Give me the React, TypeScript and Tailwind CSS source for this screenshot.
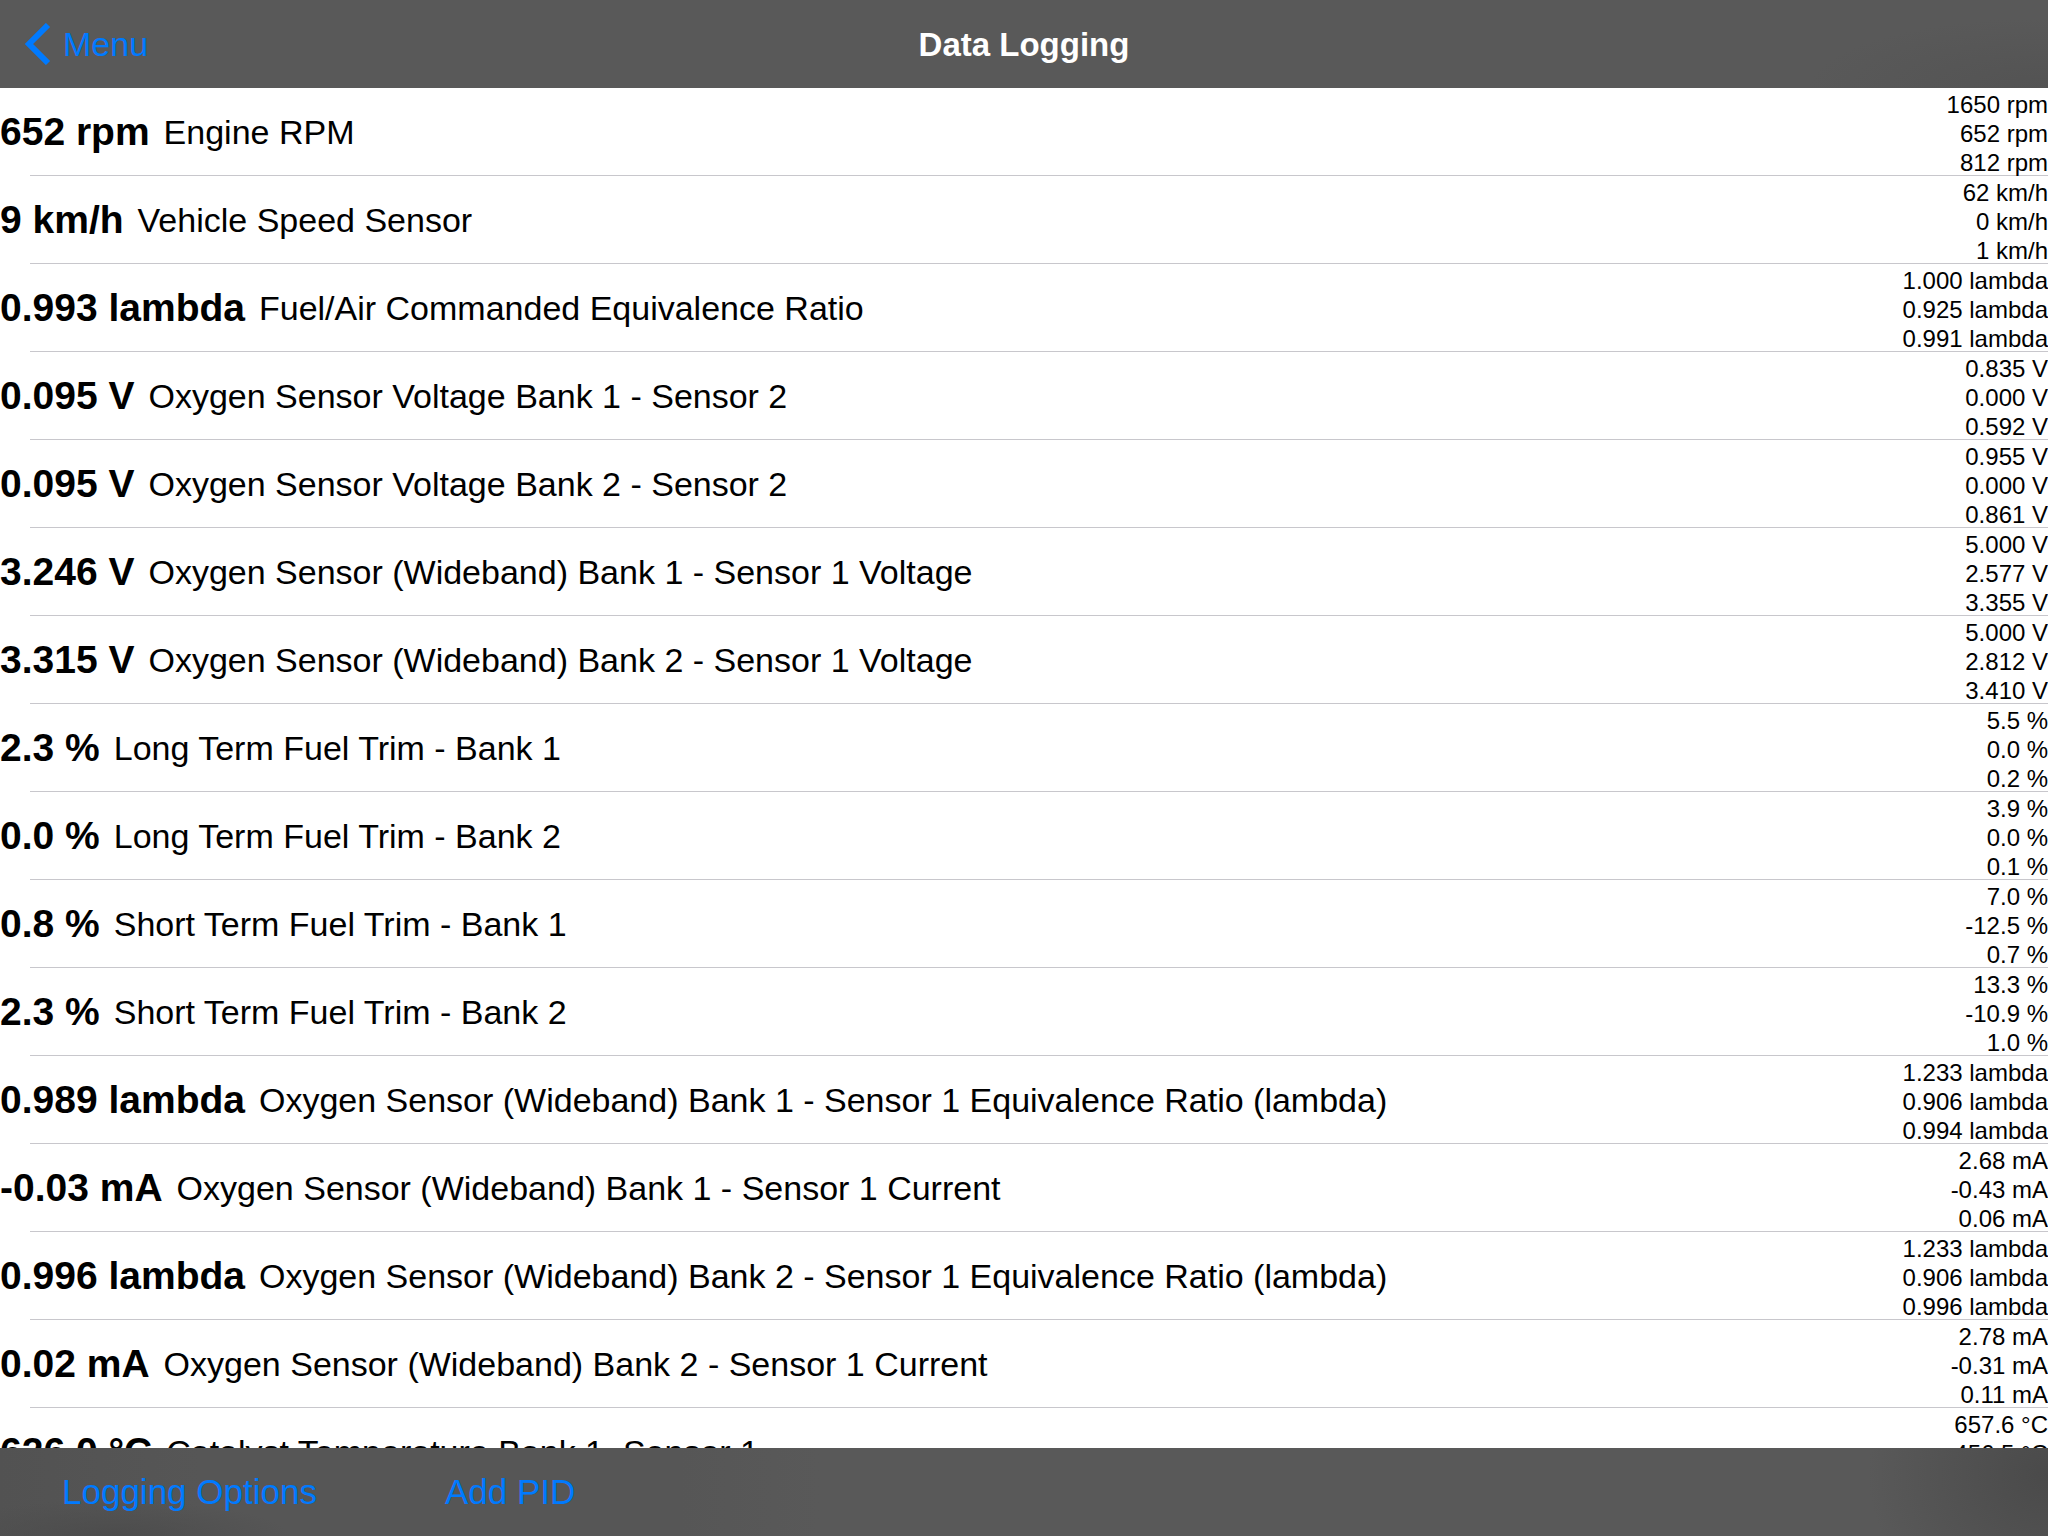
type Reading = {
  value: string;
  name: string;
  stats: [string, string, string];
};

const readings: Reading[] = [
  { value: "652 rpm", name: "Engine RPM", stats: ["1650 rpm", "652 rpm", "812 rpm"] },
  { value: "9 km/h", name: "Vehicle Speed Sensor", stats: ["62 km/h", "0 km/h", "1 km/h"] },
  { value: "0.993 lambda", name: "Fuel/Air Commanded Equivalence Ratio", stats: ["1.000 lambda", "0.925 lambda", "0.991 lambda"] },
  { value: "0.095 V", name: "Oxygen Sensor Voltage Bank 1 - Sensor 2", stats: ["0.835 V", "0.000 V", "0.592 V"] },
  { value: "0.095 V", name: "Oxygen Sensor Voltage Bank 2 - Sensor 2", stats: ["0.955 V", "0.000 V", "0.861 V"] },
  { value: "3.246 V", name: "Oxygen Sensor (Wideband) Bank 1 - Sensor 1 Voltage", stats: ["5.000 V", "2.577 V", "3.355 V"] },
  { value: "3.315 V", name: "Oxygen Sensor (Wideband) Bank 2 - Sensor 1 Voltage", stats: ["5.000 V", "2.812 V", "3.410 V"] },
  { value: "2.3 %", name: "Long Term Fuel Trim - Bank 1", stats: ["5.5 %", "0.0 %", "0.2 %"] },
  { value: "0.0 %", name: "Long Term Fuel Trim - Bank 2", stats: ["3.9 %", "0.0 %", "0.1 %"] },
  { value: "0.8 %", name: "Short Term Fuel Trim - Bank 1", stats: ["7.0 %", "-12.5 %", "0.7 %"] },
  { value: "2.3 %", name: "Short Term Fuel Trim - Bank 2", stats: ["13.3 %", "-10.9 %", "1.0 %"] },
  { value: "0.989 lambda", name: "Oxygen Sensor (Wideband) Bank 1 - Sensor 1 Equivalence Ratio (lambda)", stats: ["1.233 lambda", "0.906 lambda", "0.994 lambda"] },
  { value: "-0.03 mA", name: "Oxygen Sensor (Wideband) Bank 1 - Sensor 1 Current", stats: ["2.68 mA", "-0.43 mA", "0.06 mA"] },
  { value: "0.996 lambda", name: "Oxygen Sensor (Wideband) Bank 2 - Sensor 1 Equivalence Ratio (lambda)", stats: ["1.233 lambda", "0.906 lambda", "0.996 lambda"] },
  { value: "0.02 mA", name: "Oxygen Sensor (Wideband) Bank 2 - Sensor 1 Current", stats: ["2.78 mA", "-0.31 mA", "0.11 mA"] },
  { value: "626.0 °C", name: "Catalyst Temperature Bank 1, Sensor 1", stats: ["657.6 °C", "456.5 °C", "610.2 °C"] },
];

function ReadingRow({ reading }: { reading: Reading }) {
  return (
    <li>
      <div className="flex h-[87px] items-start justify-between">
        <div className="flex h-full items-center gap-[14px] whitespace-nowrap">
          <strong className="text-[39px] leading-[48px] font-bold">{reading.value}</strong>
          <span className="text-[34px] leading-[48px]">{reading.name}</span>
        </div>
        <div className="pt-0.5 text-right text-2xl leading-[29px] whitespace-nowrap">
          {reading.stats.map((stat, index) => <p key={index}>{stat}</p>)}
        </div>
      </div>
      <div className="ml-[30px] h-px bg-[#c8c7cc]" />
    </li>
  );
}

export default function App() {
  return (
    <div className="flex h-screen flex-col overflow-hidden bg-white font-['Liberation_Sans',Arial,sans-serif] text-black">
      <header className="grid h-[88px] shrink-0 grid-cols-3 items-center bg-[#595959] bg-[radial-gradient(ellipse_240px_70px_at_100%_100%,#535353,transparent)]">
        <button type="button" className="flex items-center gap-3 justify-self-start pl-6 text-[34px] leading-10 text-[#007aff]">
          <svg className="h-[42px] w-[27px]" viewBox="0 0 27 42" fill="none" stroke="currentColor" strokeWidth="6" aria-hidden="true">
            <path d="M24 2 5 21 24 40" />
          </svg>
          Menu
        </button>
        <h1 className="pt-0.5 text-center text-[33px] leading-10 font-bold text-white">Data Logging</h1>
      </header>
      <main className="min-h-0 flex-1 overflow-hidden">
        <ul>
          {readings.map((reading, index) => <ReadingRow key={index} reading={reading} />)}
        </ul>
      </main>
      <footer className="flex h-[88px] shrink-0 items-center gap-32 bg-[#595959] bg-[radial-gradient(ellipse_180px_36px_at_110px_100%,#4c4c4c,transparent),radial-gradient(ellipse_180px_160px_at_100%_30%,#4a4a4a,transparent),linear-gradient(to_right,#525252,#565656_200px,#565656_680px,transparent_820px)] px-[62px] text-[35px] leading-10 text-[#007aff]">
        <button type="button">Logging Options</button>
        <button type="button">Add PID</button>
      </footer>
    </div>
  );
}
